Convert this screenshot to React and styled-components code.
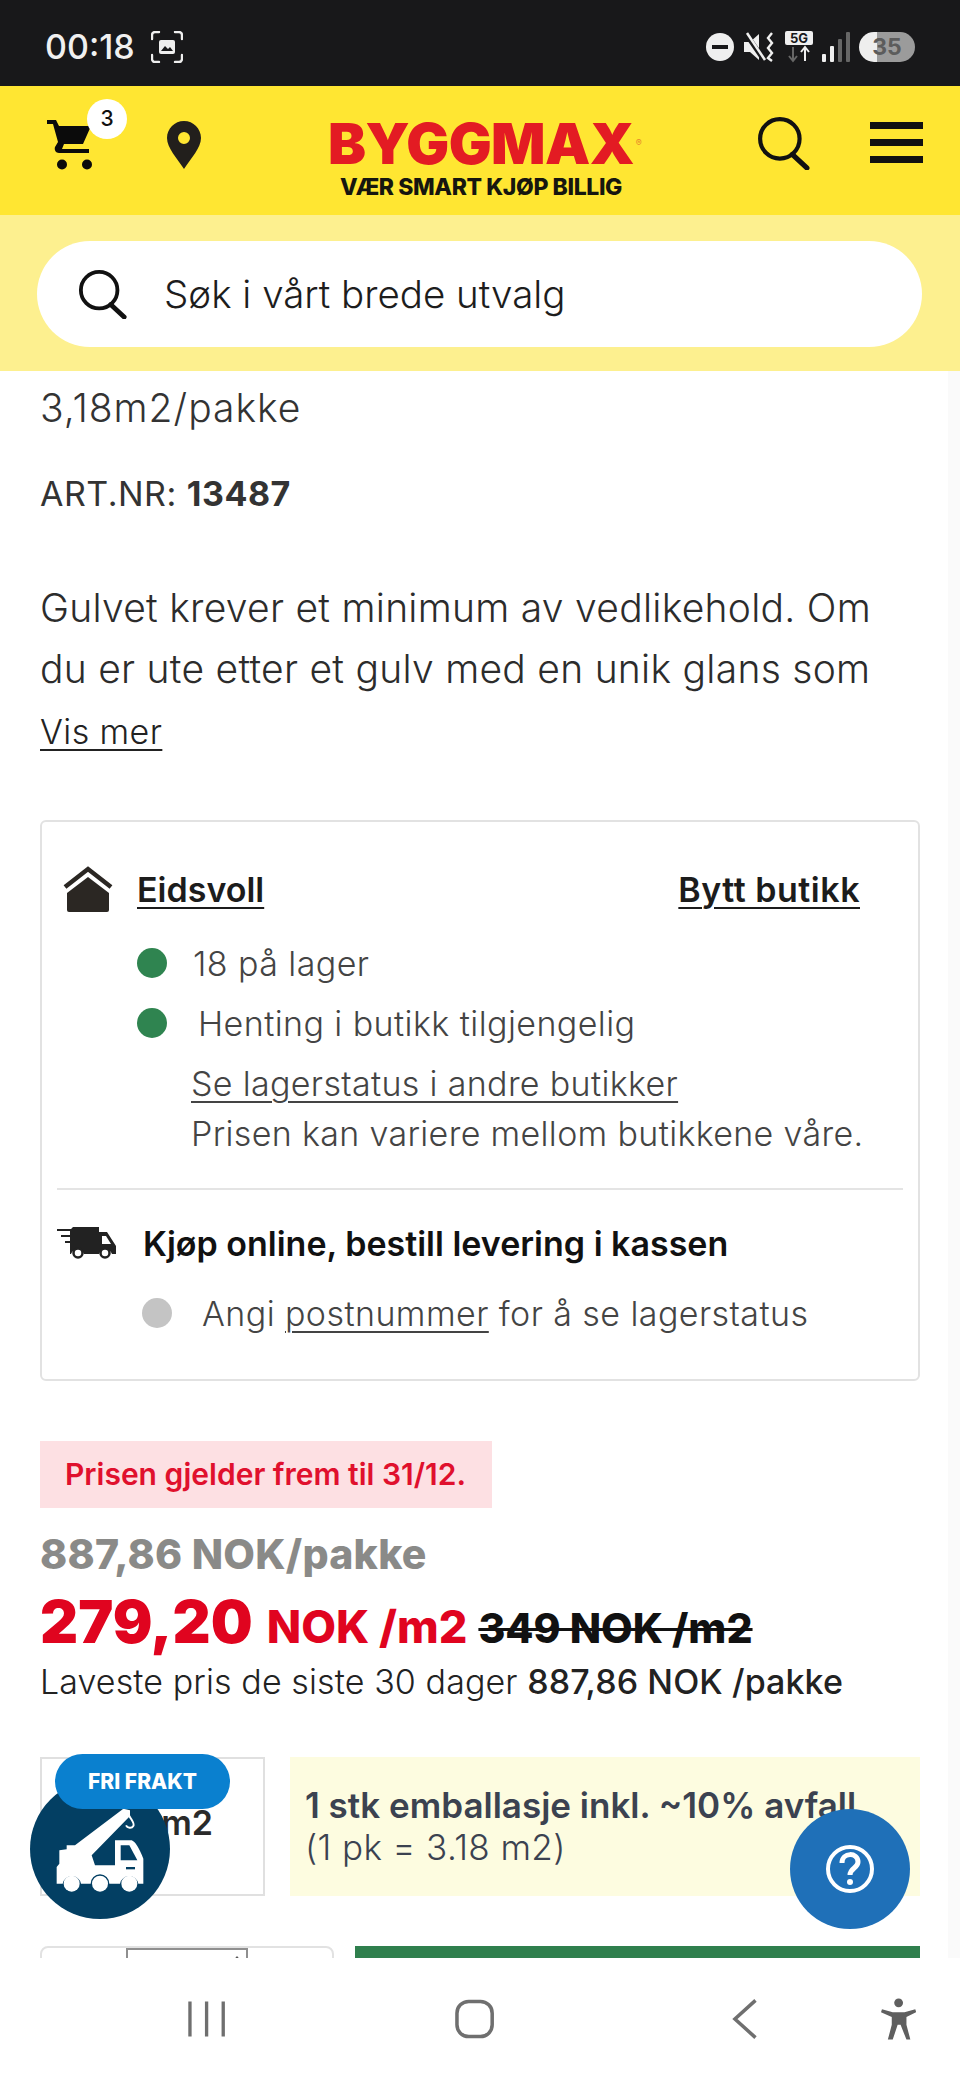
import React from "react";
import styled, { createGlobalStyle } from "styled-components";

const Global = createGlobalStyle`
  html, body { margin: 0; padding: 0; background: #fff; }
  body { font-family: "Inter", "Noto Sans", sans-serif; color: #333; }
  * { box-sizing: border-box; }
`;

const Phone = styled.div`
  position: relative;
  width: 960px;
  height: 2080px;
  display: flex;
  flex-direction: column;
  overflow: hidden;
  background: #fff;
`;

const StatusBar = styled.div`
  height: 86px;
  flex: none;
  background: #18181a;
  display: flex;
  align-items: center;
  justify-content: space-between;
  padding: 7px 45px 0 45px;
  color: #f0f0f0;
`;

const StatusGroup = styled.div`
  display: flex;
  align-items: center;
  gap: ${(p) => p.$gap || 0}px;
`;

const Clock = styled.span`
  font-family: "Inter", sans-serif;
  font-size: 34px;
  font-weight: 500;
`;

const Battery = styled.div`
  width: 56px;
  height: 30px;
  border-radius: 15px;
  background: linear-gradient(90deg, #eee 0 33%, #9b9b9b 33% 100%);
  color: #5c5c5c;
  font: 700 23px/30px "Inter", sans-serif;
  text-align: center;
`;

const Header = styled.header`
  height: 129px;
  flex: none;
  background: #ffe632;
  display: flex;
  align-items: center;
  padding: 0 37px 0 47px;
`;

const CartWrap = styled.div`
  position: relative;
  width: 50px;
  height: 50px;
  margin-top: -11px;
`;

const CartBadge = styled.span`
  position: absolute;
  top: -21px;
  left: 40px;
  width: 40px;
  height: 40px;
  border-radius: 50%;
  background: #fff;
  color: #111;
  font: 500 21px/40px "Inter", sans-serif;
  text-align: center;
`;

const Logo = styled.div`
  width: 320px;
  margin: 15px 116px 0 120px;
  text-align: center;
  display: flex;
  flex-direction: column;
  align-items: center;
`;

const LogoWord = styled.div`
  position: relative;
  font: 900 57px/52px "Inter", sans-serif;
  letter-spacing: -0.6px;
  color: #e31b23;
`;

const LogoMark = styled.span`
  position: absolute;
  right: -8px;
  top: 20px;
  font: 400 9px/10px "Inter", sans-serif;
  letter-spacing: 0;
  color: #e8852a;
`;

const LogoTag = styled.div`
  font: 800 23px/24px "Inter", sans-serif;
  letter-spacing: -0.4px;
  color: #16160f;
  margin-top: 5px;
  white-space: nowrap;
`;

const HeaderSearch = styled.div`
  display: flex;
  margin-top: -16px;
`;

const Burger = styled.div`
  width: 53px;
  margin: -17px 0 0 59px;
  display: flex;
  flex-direction: column;
  gap: 10px;
`;

const BurgerBar = styled.span`
  display: block;
  height: 7px;
  background: #111;
`;

const SearchBand = styled.div`
  height: 156px;
  flex: none;
  background: #fdf08f;
  padding: 26px 38px 24px 37px;
`;

const SearchPill = styled.div`
  height: 106px;
  border-radius: 53px;
  background: #fff;
  display: flex;
  align-items: center;
  padding-left: 41px;
  gap: 36px;
  color: #1d1d1d;
  font-size: 38.5px;
  font-weight: 300;
`;

const Content = styled.main`
  flex: 1;
  min-height: 0;
  overflow: hidden;
  padding: 14px 40px 0;
  color: #333;
`;

const Size = styled.div`
  font-size: 39px;
  line-height: 46px;
  font-weight: 300;
  letter-spacing: 1px;
  color: #333;
`;

const ArtNr = styled.div`
  font-size: 34px;
  line-height: 42px;
  margin-top: 42px;
  letter-spacing: 0.5px;
  & b { font-weight: 700; }
`;

const Para = styled.p`
  font-size: 39px;
  line-height: 61px;
  margin: 62px 0 0;
  font-weight: 300;
  letter-spacing: 0.27px;
  color: #2c2c2c;
`;

const ShowMore = styled.a`
  display: block;
  margin-top: 13px;
  font-size: 34px;
  font-weight: 300;
  line-height: 40px;
  letter-spacing: 0.4px;
  text-decoration: underline;
  text-underline-offset: 5px;
  text-decoration-thickness: 2px;
  color: #222;
`;

const Card = styled.section`
  margin-top: 68px;
  width: 880px;
  height: 561px;
  border: 2px solid #e2e2e2;
  border-radius: 6px;
  padding: 42px 15px 0;
`;

const StoreRow = styled.div`
  display: flex;
  align-items: center;
  height: 50px;
  padding: 0 43px 0 6px;
`;

const StoreLink = styled.a`
  font-size: 34px;
  font-weight: 600;
  color: #1c1c1c;
  letter-spacing: ${(p) => (p.$end ? "0.5px" : "0")};
  text-decoration: underline;
  text-underline-offset: 5px;
  text-decoration-thickness: 2px;
  margin-left: ${(p) => (p.$end ? "auto" : "24px")};
`;

const StatusLine = styled.div`
  display: flex;
  align-items: center;
  height: 40px;
  margin-top: ${(p) => p.$top}px;
  padding-left: ${(p) => p.$left}px;
  font-size: 34px;
  font-weight: 300;
  letter-spacing: 0.42px;
  color: #444;
`;

const Dot = styled.span`
  flex: none;
  width: 30px;
  height: 30px;
  border-radius: 50%;
  background: ${(p) => p.$color};
  margin-right: ${(p) => p.$gap}px;
`;

const Indented = styled.div`
  padding-left: 134px;
  font-size: 34px;
  font-weight: 300;
  line-height: 50px;
  letter-spacing: 0.33px;
  color: #444;
  margin-top: ${(p) => p.$top}px;
`;

const Under = styled.a`
  text-decoration: underline;
  text-underline-offset: 5px;
  text-decoration-thickness: 2px;
`;

const Divider = styled.hr`
  margin: 29px 0 0;
  border: 0;
  height: 2px;
  background: #e4e4e4;
`;

const DeliveryRow = styled.div`
  display: flex;
  align-items: center;
  gap: 26px;
  height: 50px;
  margin-top: 28px;
  font-size: 34px;
  font-weight: 600;
  color: #111;
`;

const Notice = styled.div`
  margin-top: 60px;
  width: 452px;
  height: 67px;
  background: #fde0e3;
  color: #e0102d;
  font-size: 30px;
  font-weight: 600;
  line-height: 67px;
  padding-left: 25px;
`;

const WasPack = styled.div`
  margin-top: 23px;
  font-size: 41px;
  line-height: 46px;
  font-weight: 800;
  letter-spacing: 0.25px;
  color: #8a8a88;
`;

const PriceRow = styled.div`
  display: flex;
  align-items: baseline;
  height: 66px;
  margin-top: 9px;
  white-space: nowrap;
`;

const BigPrice = styled.span`
  font-size: 59px;
  font-weight: 900;
  color: #e0041f;
`;

const PriceUnit = styled.span`
  font-size: 45px;
  font-weight: 800;
  color: #e0041f;
  margin-left: 14px;
`;

const OldPrice = styled.span`
  font-size: 41px;
  font-weight: 800;
  color: #111;
  margin-left: 11px;
  text-decoration: line-through;
  text-decoration-thickness: 3px;
`;

const Lowest = styled.div`
  font-size: 34px;
  font-weight: 300;
  line-height: 44px;
  margin-top: 8px;
  letter-spacing: 0.1px;
  color: #222;
  & b { font-weight: 500; }
`;

const UnitRow = styled.div`
  display: flex;
  gap: 25px;
  margin-top: 53px;
  height: 139px;
  width: 880px;
`;

const UnitBox = styled.div`
  width: 225px;
  border: 2px solid #e0e0e0;
  display: flex;
  justify-content: flex-end;
  padding: 36px 50px 0 0;
  font-size: 34px;
  font-weight: 600;
  line-height: 56px;
  color: #2a2a2a;
`;

const PackInfo = styled.div`
  flex: 1;
  background: #fdfce0;
  padding: 27px 15px 0;
  color: #3b4250;
  font-size: 35px;
  font-weight: 300;
  line-height: 42px;
  letter-spacing: 0.4px;
  white-space: nowrap;
  overflow: hidden;
  & b { font-weight: 600; display: block; letter-spacing: 0; }
`;

const BuyRow = styled.div`
  display: flex;
  gap: 21px;
  margin-top: 50px;
  width: 880px;
  height: 80px;
`;

const Qty = styled.div`
  width: 294px;
  border: 2px solid #e2e2e2;
  border-radius: 8px;
  padding: 0 84px;
`;

const QtyInput = styled.div`
  position: relative;
  height: 100%;
  border: 2px solid #8f8f8f;
  border-bottom: 0;
  &::after {
    content: "";
    position: absolute;
    right: 4px;
    top: 6px;
    border: 5px solid transparent;
    border-top: 0;
    border-bottom: 6px solid #555;
  }
`;

const BuyButton = styled.div`
  flex: 1;
  background: #2f7f4d;
`;

const CraneBadge = styled.div`
  position: absolute;
  left: 30px;
  top: 1779px;
  width: 140px;
  height: 140px;
  border-radius: 50%;
  background: #033f63;
  display: flex;
  align-items: center;
  justify-content: center;
`;

const FreightPill = styled.div`
  position: absolute;
  left: 55px;
  top: 1754px;
  width: 175px;
  height: 55px;
  border-radius: 28px;
  background: #0a80cf;
  color: #fff;
  font: 800 21px/55px "Inter", sans-serif;
  text-align: center;
`;

const HelpButton = styled.div`
  position: absolute;
  left: 790px;
  top: 1809px;
  width: 120px;
  height: 120px;
  border-radius: 50%;
  background: #1f70b8;
  display: flex;
  align-items: center;
  justify-content: center;
`;

const ScrollEdge = styled.div`
  position: absolute;
  right: 0;
  top: 371px;
  width: 12px;
  height: 1587px;
  background: #fafafa;
`;

const NavBar = styled.nav`
  height: 122px;
  flex: none;
  background: #fff;
  position: relative;
  z-index: 1;
  display: flex;
  align-items: center;
  padding: 0 44px 0 188px;
  color: #6f6f6f;
`;

const CartIcon = () => (
  <svg width="50" height="50" viewBox="0 0 50 50">
    <path d="M0 0h9l3 6h32l-8 18H17l-2 5h27v4H12c-3 0-5-3-4-6l3-5L6 4H0z" fill="#0b0b0b" />
    <circle cx="15" cy="44.5" r="5" fill="#0b0b0b" />
    <circle cx="40" cy="44.5" r="5" fill="#0b0b0b" />
  </svg>
);

const PinIcon = () => (
  <svg width="34" height="48" viewBox="0 0 34 48" style={{ marginLeft: "70px", marginTop: "-12px" }}>
    <path
      fillRule="evenodd"
      fill="#221f1c"
      d="M17 0C7.6 0 0 7.6 0 17c0 10 10 20 17 31 7-11 17-21 17-31C34 7.6 26.4 0 17 0zm0 11a6 6 0 1 1 0 12 6 6 0 0 1 0-12z"
    />
  </svg>
);

const SearchIcon = ({ size }) => (
  <svg width={size} height={size} viewBox="0 0 52 52" fill="none" stroke="#111" strokeLinecap="round">
    <circle cx="22" cy="22" r="19" strokeWidth="4" />
    <path d="M34 37l14 13" strokeWidth="5" />
  </svg>
);

const HomeIcon = () => (
  <svg width="50" height="46" viewBox="0 0 50 46">
    <path d="M2 21L25 3l23 18" fill="none" stroke="#2b2723" strokeWidth="4.5" />
    <path d="M25 11L46 27v17a2 2 0 0 1-2 2H6a2 2 0 0 1-2-2V27z" fill="#2b2723" />
  </svg>
);

const TruckIcon = () => (
  <svg width="60" height="32" viewBox="0 0 60 32">
    <path d="M0 2h14v2H0zM4 8h10v2H4zM8 14h6v2H8z" fill="#222" />
    <path d="M16 0h26v5h8l9 14v8h-4a7 7 0 0 0-13 0H27a7 7 0 0 0-13 0h-1V3z" fill="#222" />
    <path d="M45 9h4l5 8h-9z" fill="#fff" />
    <circle cx="21" cy="26" r="4.5" fill="#fff" stroke="#222" strokeWidth="2.5" />
    <circle cx="48" cy="26" r="4.5" fill="#fff" stroke="#222" strokeWidth="2.5" />
  </svg>
);

const CraneIcon = () => (
  <svg width="90" height="87" viewBox="165 235 270 261" style={{ marginTop: "3px" }}>
    <path
      fill="#fff"
      d="M170 465V415L178 405V365L200 362V350H225L370 240 390 245V262L275 380 285 410H345V335H395Q410 340 430 390V465H415A28 28 0 0 0 360 465H328A28 28 0 0 0 272 465H243A28 28 0 0 0 188 465Z"
    />
    <path fill="#033f63" d="M362 350H388L412 395H362Z" />
    <path fill="#033f63" d="M378 415H405V422H378Z" />
    <path d="M388 262C395 275 405 285 400 292 395 300 382 298 378 290" fill="none" stroke="#fff" strokeWidth="6" />
    <circle cx="215" cy="465" r="24" fill="#fff" />
    <circle cx="300" cy="465" r="24" fill="#fff" />
    <circle cx="388" cy="465" r="24" fill="#fff" />
  </svg>
);

const HelpIcon = () => (
  <svg width="50" height="50" viewBox="0 0 50 50" fill="none" stroke="#fff">
    <circle cx="25" cy="25" r="22" strokeWidth="4" />
    <path d="M17 19c0-11 16-11 16-1 0 6-8 6-8 13" strokeWidth="5" />
    <circle cx="25" cy="38" r="3" fill="#fff" stroke="none" />
  </svg>
);

const ScreenshotIcon = () => (
  <svg width="32" height="32" viewBox="0 0 32 32" fill="none" stroke="#eee" strokeWidth="2.4" strokeLinecap="round">
    <path d="M1 8V4a3 3 0 0 1 3-3h4M24 1h4a3 3 0 0 1 3 3v4M31 24v4a3 3 0 0 1-3 3h-4M8 31H4a3 3 0 0 1-3-3v-4" />
    <rect x="8" y="9" width="16" height="14" rx="2" fill="#eee" stroke="none" />
    <path d="M10 20l4-5 3 3 2-2 3 4z" fill="#18181a" stroke="none" />
  </svg>
);

const DndIcon = () => (
  <svg width="30" height="30" viewBox="0 0 30 30">
    <circle cx="15" cy="15" r="14" fill="#efefef" />
    <rect x="7" y="13" width="16" height="4" fill="#18181a" />
  </svg>
);

const MuteIcon = () => (
  <svg width="32" height="30" viewBox="0 0 32 30" fill="none">
    <path d="M0 10h6l9-8v26l-9-8H0z" fill="#efefef" />
    <path d="M2 2l18 26" stroke="#18181a" strokeWidth="5" />
    <path d="M3 1l18 27" stroke="#efefef" strokeWidth="2.5" />
    <path d="M28 1l-4 5 4 5-4 5 4 5-4 5 4 3" stroke="#efefef" strokeWidth="2.4" />
  </svg>
);

const NetworkIcon = () => (
  <svg width="28" height="32" viewBox="0 0 28 32">
    <rect width="28" height="14" rx="2" fill="#efefef" />
    <text x="14" y="12" fontFamily="Inter, sans-serif" fontSize="13" fontWeight="700" textAnchor="middle" fill="#18181a">5G</text>
    <path d="M8 16v13M4 25l4 5 4-5" stroke="#666" strokeWidth="2" fill="none" />
    <path d="M20 30V17M16 21l4-5 4 5" stroke="#efefef" strokeWidth="2" fill="none" />
  </svg>
);

const SignalIcon = () => (
  <svg width="28" height="30" viewBox="0 0 28 30">
    <rect x="0" y="22" width="4" height="8" rx="1" fill="#efefef" />
    <rect x="8" y="14" width="4" height="16" rx="1" fill="#efefef" />
    <rect x="16" y="7" width="4" height="23" rx="1" fill="#666" />
    <rect x="24" y="0" width="4" height="30" rx="1" fill="#666" />
  </svg>
);

const RecentIcon = () => (
  <svg width="38" height="38" viewBox="0 0 38 38" stroke="#6f6f6f" strokeWidth="3.4">
    <path d="M2 1v36M19 1v36M36 1v36" />
  </svg>
);

const HomeNavIcon = () => (
  <svg width="40" height="40" viewBox="0 0 40 40" fill="none" stroke="#6f6f6f" strokeWidth="3.6" style={{ marginLeft: "230px" }}>
    <rect x="2" y="2" width="36" height="36" rx="12" />
  </svg>
);

const BackIcon = () => (
  <svg width="26" height="40" viewBox="0 0 26 40" fill="none" stroke="#6f6f6f" strokeWidth="3.6" style={{ marginLeft: "238px" }}>
    <path d="M24 1L3 20l21 19" />
  </svg>
);

const PersonIcon = () => (
  <svg width="36" height="42" viewBox="0 0 36 42" style={{ marginLeft: "123px" }}>
    <circle cx="18" cy="4.5" r="4.5" fill="#5f5f5f" />
    <path d="M1 11l11 3h12l11-3 1 3-10 5v8l4 15h-4l-6-15h-3l-5 15H7l4-15v-8L0 14z" fill="#5f5f5f" />
  </svg>
);

export default function App() {
  return (
    <Phone>
      <Global />
      <StatusBar>
        <StatusGroup $gap={16}>
          <Clock>00:18</Clock>
          <ScreenshotIcon />
        </StatusGroup>
        <StatusGroup $gap={9}>
          <DndIcon />
          <MuteIcon />
          <NetworkIcon />
          <SignalIcon />
          <Battery>35</Battery>
        </StatusGroup>
      </StatusBar>
      <Header>
        <CartWrap>
          <CartIcon />
          <CartBadge>3</CartBadge>
        </CartWrap>
        <PinIcon />
        <Logo>
          <LogoWord>
            BYGGMAX
            <LogoMark>®</LogoMark>
          </LogoWord>
          <LogoTag>VÆR SMART KJØP BILLIG</LogoTag>
        </Logo>
        <HeaderSearch>
          <SearchIcon size={54} />
        </HeaderSearch>
        <Burger>
          <BurgerBar />
          <BurgerBar />
          <BurgerBar />
        </Burger>
      </Header>
      <SearchBand>
        <SearchPill>
          <SearchIcon size={50} />
          Søk i vårt brede utvalg
        </SearchPill>
      </SearchBand>
      <Content>
        <Size>3,18m2/pakke</Size>
        <ArtNr>
          ART.NR: <b>13487</b>
        </ArtNr>
        <Para>
          Gulvet krever et minimum av vedlikehold. Om
          <br />
          du er ute etter et gulv med en unik glans som
        </Para>
        <ShowMore>Vis mer</ShowMore>
        <Card>
          <StoreRow>
            <HomeIcon />
            <StoreLink>Eidsvoll</StoreLink>
            <StoreLink $end>Bytt butikk</StoreLink>
          </StoreRow>
          <StatusLine $top={29} $left={80}>
            <Dot $color="#2f8450" $gap={26} />
            18 på lager
          </StatusLine>
          <StatusLine $top={20} $left={80}>
            <Dot $color="#2f8450" $gap={31} />
            Henting i butikk tilgjengelig
          </StatusLine>
          <Indented $top={16}>
            <Under>Se lagerstatus i andre butikker</Under>
            <br />
            Prisen kan variere mellom butikkene våre.
          </Indented>
          <Divider />
          <DeliveryRow>
            <TruckIcon />
            Kjøp online, bestill levering i kassen
          </DeliveryRow>
          <StatusLine $top={25} $left={85}>
            <Dot $color="#c4c4c4" $gap={30} />
            <span>
              Angi <Under>postnummer</Under> for å se lagerstatus
            </span>
          </StatusLine>
        </Card>
        <Notice>Prisen gjelder frem til 31/12.</Notice>
        <WasPack>887,86 NOK/pakke</WasPack>
        <PriceRow>
          <BigPrice>279,20</BigPrice>
          <PriceUnit>NOK /m2</PriceUnit>
          <OldPrice>349 NOK /m2</OldPrice>
        </PriceRow>
        <Lowest>
          Laveste pris de siste 30 dager <b>887,86 NOK /pakke</b>
        </Lowest>
        <UnitRow>
          <UnitBox>m2</UnitBox>
          <PackInfo>
            <b>1 stk emballasje inkl. ~10% avfall</b>
            (1 pk = 3.18 m2)
          </PackInfo>
        </UnitRow>
        <BuyRow>
          <Qty>
            <QtyInput />
          </Qty>
          <BuyButton />
        </BuyRow>
      </Content>
      <ScrollEdge />
      <CraneBadge>
        <CraneIcon />
      </CraneBadge>
      <FreightPill>FRI FRAKT</FreightPill>
      <HelpButton>
        <HelpIcon />
      </HelpButton>
      <NavBar>
        <RecentIcon />
        <HomeNavIcon />
        <BackIcon />
        <PersonIcon />
      </NavBar>
    </Phone>
  );
}
